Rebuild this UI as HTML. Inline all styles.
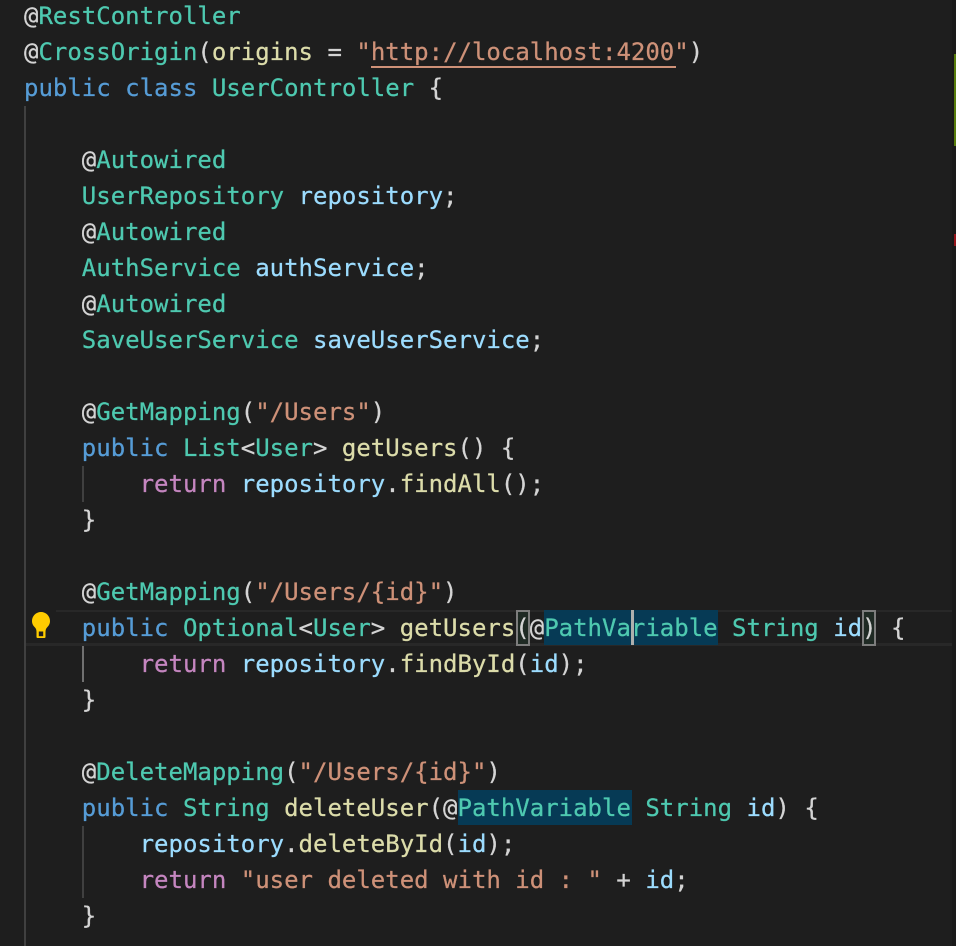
<!DOCTYPE html>
<html>
<head>
<meta charset="utf-8">
<style>
html,body{margin:0;padding:0;background:#1e1e1e;}
#e{position:relative;width:956px;height:946px;overflow:hidden;background:#1e1e1e;font-family:"DejaVu Sans Mono","Liberation Mono",monospace;font-size:24px;line-height:36px;color:#d4d4d4;}
#x{position:absolute;left:0;top:1px;width:956px;height:946px;-webkit-text-stroke:.25px currentColor;}
.l{position:absolute;left:24px;white-space:pre;height:36px;}
.a{position:absolute;}
.t{color:#4ec9b0}.k{color:#569cd6}.c{color:#c586c0}.f{color:#dcdcaa}.v{color:#9cdcfe}.s{color:#ce9178}
</style>
</head>
<body>
<div id="e">
<div class="a" style="left:56px;top:610px;width:900px;height:2px;background:#282828"></div>
<div class="a" style="left:25px;top:643px;width:931px;height:3px;background:#282828"></div>
<div class="a" style="left:544px;top:610px;width:174px;height:35px;background:#063a55"></div>
<div class="a" style="left:631px;top:610px;width:3px;height:35px;background:#aeafad"></div>
<div class="a" style="left:516px;top:610px;width:10px;height:32px;border:2px solid #7d7d7d;background:#1f2a24"></div>
<div class="a" style="left:862px;top:610px;width:10px;height:32px;border:2px solid #7d7d7d;background:#1f2a24"></div>
<div class="a" style="left:24px;top:106px;width:2px;height:840px;background:#404040"></div>
<div class="a" style="left:82px;top:466px;width:2px;height:36px;background:#404040"></div>
<div class="a" style="left:82px;top:646px;width:2px;height:36px;background:#707070"></div>
<div class="a" style="left:82px;top:826px;width:2px;height:72px;background:#404040"></div>
<div class="a" style="left:952px;top:0;width:4px;height:946px;background:#1a1a1a"></div>
<div class="a" style="left:954px;top:54px;width:2px;height:92px;background:#587c0c"></div>
<div class="a" style="left:954px;top:234px;width:2px;height:12px;background:#94151b"></div>
<svg class="a" style="left:30px;top:611px" width="22" height="28" viewBox="0 0 22 28"><path d="M11 1c-5 0-9 4-9 9 0 3 1.500 5 3 6.500 1 1 1.500 2.500 1.500 4.500v5a1 1 0 0 0 1 1h7a1 1 0 0 0 1-1v-5c0-2 .5-3.500 1.500-4.500 1.500-1.500 3-3.500 3-6.500 0-5-4-9-9-9z" fill="#fc0"/><path d="M8.800 20.500h4.400v4.700H8.800z" fill="#1e1e1e"/></svg>
<div class="a" style="left:371px;top:66px;width:305px;height:2px;background:#ce9178"></div>
<div class="a" style="left:458px;top:790px;width:174px;height:35px;background:#063a55"></div>

<div id="x">
<div class="l" style="top:-3px">@<span class="t">RestController</span></div>
<div class="l" style="top:33px">@<span class="t">CrossOrigin</span>(<span class="f">origins</span> = <span class="s">"http://localhost:4200"</span>)</div>
<div class="l" style="top:69px"><span class="k">public</span> <span class="k">class</span> <span class="t">UserController</span> {</div>
<div class="l" style="top:141px">    @<span class="t">Autowired</span></div>
<div class="l" style="top:177px">    <span class="t">UserRepository</span> <span class="v">repository</span>;</div>
<div class="l" style="top:213px">    @<span class="t">Autowired</span></div>
<div class="l" style="top:249px">    <span class="t">AuthService</span> <span class="v">authService</span>;</div>
<div class="l" style="top:285px">    @<span class="t">Autowired</span></div>
<div class="l" style="top:321px">    <span class="t">SaveUserService</span> <span class="v">saveUserService</span>;</div>
<div class="l" style="top:393px">    @<span class="t">GetMapping</span>(<span class="s">"/Users"</span>)</div>
<div class="l" style="top:429px">    <span class="k">public</span> <span class="t">List</span>&lt;<span class="t">User</span>&gt; <span class="f">getUsers</span>() {</div>
<div class="l" style="top:465px">        <span class="c">return</span> <span class="v">repository</span>.<span class="f">findAll</span>();</div>
<div class="l" style="top:501px">    }</div>
<div class="l" style="top:573px">    @<span class="t">GetMapping</span>(<span class="s">"/Users/{id}"</span>)</div>
<div class="l" style="top:609px">    <span class="k">public</span> <span class="t">Optional</span>&lt;<span class="t">User</span>&gt; <span class="f">getUsers</span>(@<span class="t">PathVariable</span> <span class="t">String</span> <span class="v">id</span>) {</div>
<div class="l" style="top:645px">        <span class="c">return</span> <span class="v">repository</span>.<span class="f">findById</span>(<span class="v">id</span>);</div>
<div class="l" style="top:681px">    }</div>
<div class="l" style="top:753px">    @<span class="t">DeleteMapping</span>(<span class="s">"/Users/{id}"</span>)</div>
<div class="l" style="top:789px">    <span class="k">public</span> <span class="t">String</span> <span class="f">deleteUser</span>(@<span class="t">PathVariable</span> <span class="t">String</span> <span class="v">id</span>) {</div>
<div class="l" style="top:825px">        <span class="v">repository</span>.<span class="f">deleteById</span>(<span class="v">id</span>);</div>
<div class="l" style="top:861px">        <span class="c">return</span> <span class="s">"user deleted with id : "</span> + <span class="v">id</span>;</div>
<div class="l" style="top:897px">    }</div>
</div>
</div>
</body>
</html>
